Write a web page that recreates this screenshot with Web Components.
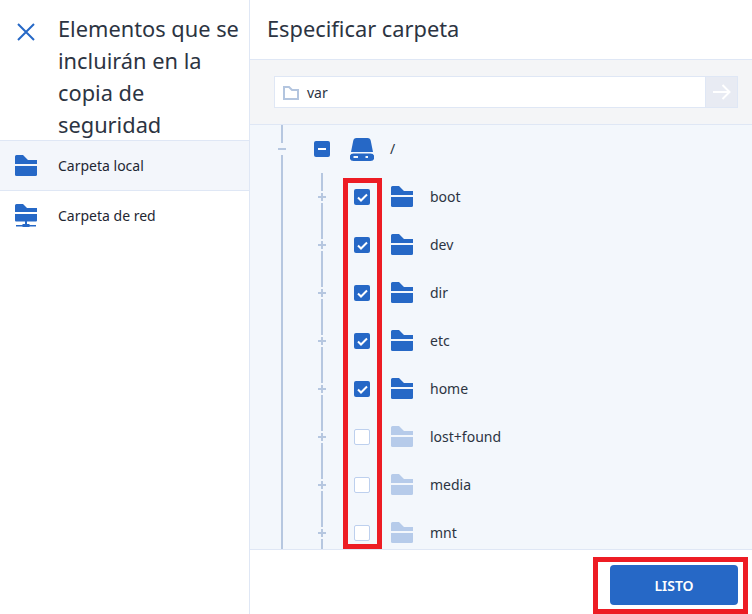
<!DOCTYPE html>
<html lang="es">
<head>
<meta charset="utf-8">
<title>Especificar carpeta</title>
<style>
  html, body { margin: 0; height: 100%; background: #fff; }
  body { font-family: "Noto Sans", "Open Sans", sans-serif; color: #2c3442; overflow: hidden; }
</style>
</head>
<body>
<backup-dialog>
  <source-panel slot="side" heading="Elementos que se incluirán en la copia de seguridad">
    <source-item icon="folder" selected>Carpeta local</source-item>
    <source-item icon="network">Carpeta de red</source-item>
  </source-panel>
  <span slot="title">Especificar carpeta</span>
  <path-input slot="path" value="var"></path-input>
  <folder-tree slot="tree">
    <tree-row depth="0" icon="drive" state="mixed">/</tree-row>
    <tree-row depth="1" icon="folder" state="on">boot</tree-row>
    <tree-row depth="1" icon="folder" state="on">dev</tree-row>
    <tree-row depth="1" icon="folder" state="on">dir</tree-row>
    <tree-row depth="1" icon="folder" state="on">etc</tree-row>
    <tree-row depth="1" icon="folder" state="on">home</tree-row>
    <tree-row depth="1" icon="folder" state="off">lost+found</tree-row>
    <tree-row depth="1" icon="folder" state="off">media</tree-row>
    <tree-row depth="1" icon="folder" state="off">mnt</tree-row>
  </folder-tree>
  <primary-button slot="action">LISTO</primary-button>
</backup-dialog>

<script>
const BLUE = '#2668c6';
const ICONS = {
  folder: `<svg width="22" height="21" viewBox="0 0 22 21" fill="currentColor"><path d="M0 9V1.5Q0 0 1.5 0H8l5 5h9v4z"/><path d="M0 11h22v8.5q0 1.5-1.5 1.5h-19Q0 21 0 19.5z"/></svg>`,
  network: `<svg width="22" height="23" viewBox="0 0 22 23" fill="currentColor"><path d="M0 8V1.5Q0 0 1.5 0H8l4 4h10v4z"/><path d="M0 10h22v6.5q0 1-1 1H1q-1 0-1-1z"/><path d="M10 17h2v3h-2z"/><path d="M7.5 20h7v1h6.5v1.500h-6.500V23h-7v-.5H1V21h6.500z"/></svg>`,
  drive: `<svg width="24" height="23" viewBox="0 0 24 23" fill="currentColor"><path d="M3.2 3Q3.600 0 6.500 0h11q2.900 0 3.300 3L23 14H1z"/><path fill-rule="evenodd" d="M3.500 15.500h17a3.750 3.750 0 0 1 0 7.500h-17a3.750 3.750 0 0 1 0-7.500zM3.500 18v2H8v-2zM15.500 18v2H18v-2z"/></svg>`
};

// Barra lateral con el título y la lista de orígenes
class SourcePanel extends HTMLElement {
  constructor() {
    super();
    this.attachShadow({ mode: 'open' });
    this.shadowRoot.innerHTML = `
      <style>
        :host { display: flex; flex-direction: column; height: 100%; }
        header { display: flex; height: 140px; box-sizing: border-box; padding: 13px 0 0 17px; }
        button { flex: none; width: 41px; height: 32px; padding: 6px 0 0; border: 0; background: none; text-align: left; color: ${BLUE}; }
        svg { display: block; }
        h2 { margin: 0; font-size: 21.8px; line-height: 32px; font-weight: 400; flex: 1; }
      </style>
      <header>
        <button aria-label="Cerrar"><svg width="18" height="18" viewBox="0 0 18 18" fill="none" stroke="currentColor" stroke-width="2"><path d="M1 1l16 16M17 1L1 17"/></svg></button>
        <h2></h2>
      </header>
      <slot></slot>`;
    this.shadowRoot.querySelector('h2').textContent = this.getAttribute('heading');
  }
}

class SourceItem extends HTMLElement {
  constructor() {
    super();
    this.attachShadow({ mode: 'open' });
    this.shadowRoot.innerHTML = `
      <style>
        :host { display: flex; align-items: center; height: 50px; box-sizing: border-box; padding-left: 15px; gap: 21px; font-size: 14px; border-top: 1px solid #dfe7f5; color: #1f2733; }
        :host([selected]) { background: #f3f6fb; }
        i { display: flex; color: ${BLUE}; }
        span { padding-bottom: 1px; }
      </style>
      <i>${ICONS[this.getAttribute('icon')]}</i><span><slot></slot></span>`;
  }
}

class PathInput extends HTMLElement {
  constructor() {
    super();
    this.attachShadow({ mode: 'open' });
    this.shadowRoot.innerHTML = `
      <style>
        :host { display: flex; height: 32px; box-sizing: border-box; border: 1px solid #dfe7f5; background: #fff; }
        .field { flex: 1; display: flex; align-items: center; gap: 8px; padding-left: 8px; font-size: 14px; }
        .field svg { margin-top: 2px; }
        .go { width: 31px; display: flex; align-items: center; justify-content: center; background: #e8ebf3; border-left: 1px solid #dfe7f5; }
        svg { display: block; }
      </style>
      <div class="field">
        <svg width="16" height="14" viewBox="0 0 16 14" fill="none" stroke="#b3c5df" stroke-width="2"><path d="M1 13V1h5l3 3h6v9z"/></svg>
        <span></span>
      </div>
      <div class="go"><svg width="18" height="16" viewBox="0 0 18 16" fill="none" stroke="#fff" stroke-width="2"><path d="M0 8h16M9.500 1l7 7-7 7"/></svg></div>`;
    this.shadowRoot.querySelector('span').textContent = this.getAttribute('value');
  }
}

class FolderTree extends HTMLElement {
  constructor() {
    super();
    this.attachShadow({ mode: 'open' });
    this.shadowRoot.innerHTML = `
      <style>
        :host { display: block; height: 100%; overflow: hidden; padding-left: 12px; }
      </style>
      <slot></slot>`;
  }
}

class TreeRow extends HTMLElement {
  constructor() {
    super();
    this.attachShadow({ mode: 'open' });
    const depth = Number(this.getAttribute('depth'));
    const state = this.getAttribute('state');
    let guides = '';
    for (let i = 0; i < depth; i++) guides += `<div class="guide"><b></b><b></b><b></b></div>`;
    const mark = depth === 0
      ? '<svg width="8" height="2"><path d="M0 0h8v2H0z"/></svg>'
      : '<svg width="8" height="8"><path d="M3 0h2v3h3v2H5v3H3V5H0V3h3z"/></svg>';
    this.shadowRoot.innerHTML = `
      <style>
        :host { display: flex; align-items: stretch; height: 48px; font-size: 14px; }
        .guide, .mark { flex: none; width: 40px; display: flex; flex-direction: column; align-items: center; }
        .guide b, .mark b { flex: 1; width: 2px; background: #b6c7e0; }
        .mark span { height: 12px; display: flex; align-items: center; }
        .mark svg { display: block; fill: #b6c7e0; }
        .check { flex: none; width: 40px; display: flex; align-items: center; justify-content: center; }
        .box { width: 16px; height: 16px; box-sizing: border-box; border-radius: 2px; display: flex; align-items: center; justify-content: center; background: ${BLUE}; }
        .box svg { display: block; }
        :host([state="off"]) .box { background: #fff; border: 1px solid #bdd0ee; }
        .icon { flex: none; width: 24px; margin-left: 8px; display: flex; align-items: center; justify-content: center; color: ${BLUE}; }
        .icon svg { margin-bottom: 1px; }
        :host([icon="drive"]) .icon svg { margin: 1px 0 0; }
        :host([state="off"]) .icon { color: #b6cbea; }
        .label { margin-left: 16px; padding-bottom: 2px; display: flex; align-items: center; color: #2c3442; }
      </style>
      ${guides}
      <div class="mark"><b></b><span>${mark}</span><b></b></div>
      <div class="check"><div class="box">${
        state === 'on' ? '<svg width="11" height="9" viewBox="0 0 11 9" fill="none" stroke="#fff" stroke-width="2"><path d="M1 4.500l3 3 6-6"/></svg>'
        : state === 'mixed' ? '<svg width="8" height="2"><path d="M0 0h8v2H0z" fill="#fff"/></svg>' : ''
      }</div></div>
      <div class="icon">${ICONS[this.getAttribute('icon')]}</div>
      <div class="label"><slot></slot></div>`;
  }
}

class PrimaryButton extends HTMLElement {
  constructor() {
    super();
    this.attachShadow({ mode: 'open' });
    this.shadowRoot.innerHTML = `
      <style>
        :host { display: flex; align-items: center; justify-content: center; width: 128px; height: 40px; border-radius: 4px; background: ${BLUE}; color: #fff; font-size: 14px; font-weight: 600; }
      </style>
      <slot></slot>`;
  }
}

class BackupDialog extends HTMLElement {
  constructor() {
    super();
    this.attachShadow({ mode: 'open' });
    this.shadowRoot.innerHTML = `
      <style>
        :host { display: flex; width: 752px; height: 614px; overflow: hidden; position: relative; }
        aside { flex: none; width: 249px; border-right: 1px solid #dfe7f5; box-sizing: content-box; }
        main { flex: 1; min-width: 0; display: flex; flex-direction: column; position: relative; }
        .title { height: 59px; box-sizing: content-box; border-bottom: 1px solid #dfe7f5; padding-left: 17px; display: flex; align-items: center; font-size: 21.8px; }
        .title slot { display: block; margin-bottom: 2px; }
        .path { height: 65px; box-sizing: border-box; padding: 16px 14px 0 24px; background: #f4f5f7; border-bottom: 1px solid #dfe7f5; }
        .tree { flex: 1; min-height: 0; background: #f3f7fc; }
        .foot { height: 65px; flex: none; box-sizing: border-box; border-top: 1px solid #dfe7f5; display: flex; justify-content: flex-end; padding: 15px 14px 0 0; }
        /* marcos rojos de la captura, encima del contenido */
        .mark { position: absolute; box-sizing: border-box; border: 5px solid #ed1c24; pointer-events: none; }
        .mark.checks { left: 93px; top: 178px; width: 39px; height: 371px; }
        .mark.done { left: 343px; top: 557px; width: 155px; height: 57px; }
      </style>
      <aside><slot name="side"></slot></aside>
      <main>
        <div class="title"><slot name="title"></slot></div>
        <div class="path"><slot name="path"></slot></div>
        <div class="tree"><slot name="tree"></slot></div>
        <div class="foot"><slot name="action"></slot></div>
        <div class="mark checks"></div>
        <div class="mark done"></div>
      </main>`;
  }
}

customElements.define('source-panel', SourcePanel);
customElements.define('source-item', SourceItem);
customElements.define('path-input', PathInput);
customElements.define('folder-tree', FolderTree);
customElements.define('tree-row', TreeRow);
customElements.define('primary-button', PrimaryButton);
customElements.define('backup-dialog', BackupDialog);
</script>
</body>
</html>
